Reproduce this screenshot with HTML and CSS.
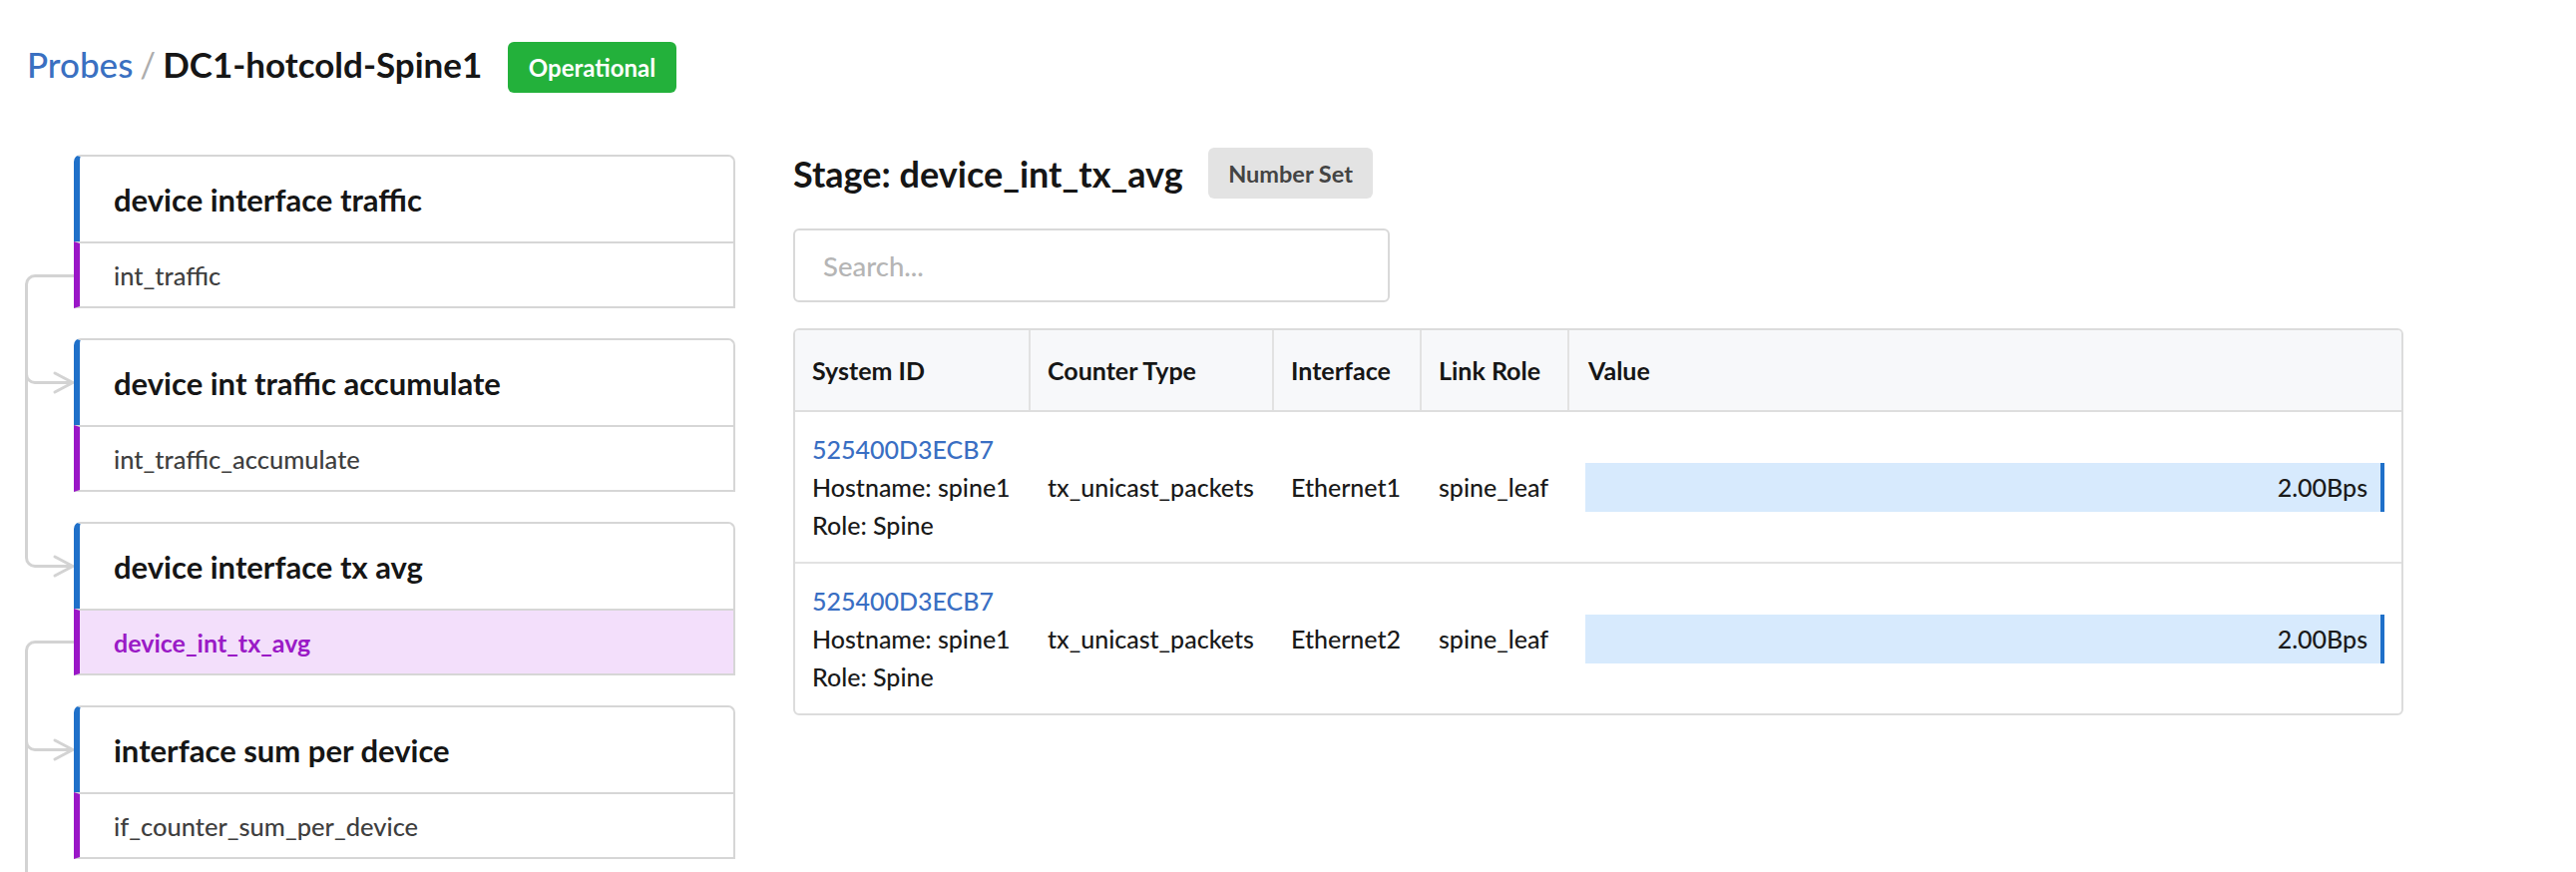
FILE: index.html
```html
<!DOCTYPE html>
<html lang="en">
<head>
<meta charset="utf-8">
<title>Probes / DC1-hotcold-Spine1</title>
<link rel="stylesheet" href="styles.css">
</head>
<body>
<div class="page">
  <header class="crumbs">
    <div class="crumb-text">
      <a class="crumb-link" href="#">Probes</a>
      <span class="crumb-sep">/</span>
      <h1 class="crumb-title">DC1-hotcold-Spine1</h1>
    </div>
    <span class="badge badge-ok">Operational</span>
  </header>

  <svg class="connectors" width="90" height="874" viewBox="0 0 90 874" aria-hidden="true">
    <g fill="none" stroke="#d3d3d3" stroke-width="3" stroke-linecap="round" stroke-linejoin="round">
      <path d="M74 276.5 H35 A8.5 8.5 0 0 0 26.5 285 V559 A8.5 8.5 0 0 0 35 567.5 H72"/>
      <path d="M26.5 375 A8.5 8.5 0 0 0 35 383.5 H72"/>
      <path d="M55 374 L73 383.5 L55 393"/>
      <path d="M55 558 L73 567.5 L55 577"/>
      <path d="M74 643.5 H35 A8.5 8.5 0 0 0 26.5 652 V880"/>
      <path d="M26.5 743 A8.5 8.5 0 0 0 35 751.5 H72"/>
      <path d="M55 742 L73 751.5 L55 761"/>
    </g>
  </svg>

  <div class="main">
    <div class="pipeline">
      <div class="card">
        <div class="card-head">device interface traffic</div>
        <div class="card-sub">int_traffic</div>
      </div>
      <div class="card">
        <div class="card-head">device int traffic accumulate</div>
        <div class="card-sub">int_traffic_accumulate</div>
      </div>
      <div class="card">
        <div class="card-head">device interface tx avg</div>
        <div class="card-sub card-sub-active">device_int_tx_avg</div>
      </div>
      <div class="card">
        <div class="card-head">interface sum per device</div>
        <div class="card-sub">if_counter_sum_per_device</div>
      </div>
    </div>

    <section class="stage">
      <div class="stage-head">
        <h2 class="stage-title">Stage: device_int_tx_avg</h2>
        <span class="badge badge-gray">Number Set</span>
      </div>
      <input class="search" type="text" placeholder="Search...">
      <div class="table">
        <div class="trow thead">
          <div class="th">System ID</div>
          <div class="th">Counter Type</div>
          <div class="th">Interface</div>
          <div class="th">Link Role</div>
          <div class="th th-last">Value</div>
        </div>
        <div class="trow tbody-row">
          <div class="td td-sys">
            <a class="sys-link" href="#">525400D3ECB7</a>
            <div>Hostname: spine1</div>
            <div>Role: Spine</div>
          </div>
          <div class="td">tx_unicast_packets</div>
          <div class="td">Ethernet1</div>
          <div class="td">spine_leaf</div>
          <div class="td td-value"><div class="bar" style="width:100%">2.00Bps</div></div>
        </div>
        <div class="trow tbody-row">
          <div class="td td-sys">
            <a class="sys-link" href="#">525400D3ECB7</a>
            <div>Hostname: spine1</div>
            <div>Role: Spine</div>
          </div>
          <div class="td">tx_unicast_packets</div>
          <div class="td">Ethernet2</div>
          <div class="td">spine_leaf</div>
          <div class="td td-value"><div class="bar" style="width:100%">2.00Bps</div></div>
        </div>
      </div>
    </section>
  </div>
</div>
</body>
</html>
```
FILE: styles.css
```css
* { box-sizing: border-box; }
html, body { margin: 0; padding: 0; background: #fff; }
body {
  font-family: Lato, "Open Sans", "Liberation Sans", sans-serif;
  color: #1a1a1a;
}
.page {
  position: relative;
  padding: 42px 0 0 27px;
  min-height: 874px;
  overflow: hidden;
}

/* breadcrumb header */
.crumbs {
  display: flex;
  align-items: center;
  height: 51px;
}
.crumb-text {
  display: flex;
  align-items: baseline;
  font-size: 35px;
  padding-bottom: 7px;
}
.crumb-link { color: #3a70c1; text-decoration: none; font-weight: 500; }
.crumb-sep { color: #adadad; margin: 0 7px; }
.crumb-title { margin: 0; font-size: 35px; font-weight: 700; color: #161616; }

.badge {
  display: inline-flex;
  align-items: center;
  height: 51px;
  padding: 0 20.5px;
  border-radius: 6px;
  font-weight: 700;
}
.badge-ok {
  margin-left: 26px;
  background: #23b13b;
  color: #fff;
  font-size: 24px;
}
.badge-gray {
  background: #e3e3e3;
  color: #444;
  font-size: 23.5px;
}

/* connectors overlay */
.connectors {
  position: absolute;
  left: 0;
  top: 0;
}

/* main area */
.main {
  display: flex;
  margin-top: 55px;
}
.pipeline {
  width: 710px;
  padding: 7px 0 0 47px;
  display: flex;
  flex-direction: column;
  gap: 30px;
  position: relative;
  z-index: 1;
}
.card { width: 663px; }
.card-head {
  height: 87px;
  display: flex;
  align-items: center;
  padding-left: 34px;
  border-top: 2px solid #d6d6d6;
  border-right: 2px solid #d6d6d6;
  border-left: 6px solid #1f70c9;
  border-radius: 7px 7px 0 0;
  font-size: 31px;
  font-weight: 700;
  color: #161616;
  background: #fff;
}
.card-sub {
  height: 67px;
  display: flex;
  align-items: center;
  padding-left: 34px;
  border-top: 2px solid #d6d6d6;
  border-right: 2px solid #d6d6d6;
  border-bottom: 2px solid #d6d6d6;
  border-left: 6px solid #9a16c7;
  font-size: 25.5px;
  font-weight: 500;
  color: #3f3f3f;
  background: #fff;
}
.card-sub-active {
  background: #f3dffb;
  color: #9a1ac6;
  font-weight: 700;
  font-size: 25px;
}

/* stage panel */
.stage {
  width: 1614px;
  margin-left: 58px;
}
.stage-head {
  display: flex;
  align-items: center;
  gap: 25px;
  height: 51px;
}
.stage-title {
  margin: 0;
  font-size: 36px;
  font-weight: 700;
  color: #161616;
}
.search {
  display: block;
  margin-top: 30px;
  width: 598px;
  height: 74px;
  border: 2px solid #d9d9d9;
  border-radius: 6px;
  padding: 0 0 0 28px;
  font-family: inherit;
  font-size: 27.5px;
  font-weight: 500;
  color: #222;
  outline: none;
}
.search::placeholder { color: #b5b5b5; }

.table {
  margin-top: 26px;
  border: 2px solid #dcdcdc;
  border-radius: 6px;
  overflow: hidden;
  font-size: 25px;
}
.trow {
  display: grid;
  grid-template-columns: 236px 244px 148px 148px 1fr;
}
.thead {
  height: 82px;
  background: #f7f8fa;
  border-bottom: 2px solid #dedede;
}
.th {
  display: flex;
  align-items: center;
  padding-left: 17px;
  border-right: 2px solid #e2e2e2;
  font-weight: 700;
  color: #161616;
}
.th-last { border-right: none; padding-left: 19px; }
.tbody-row {
  color: #1a1a1a;
  font-weight: 500;
  line-height: 38px;
}
.tbody-row + .tbody-row { border-top: 2px solid #e2e2e2; }
.td {
  display: flex;
  align-items: center;
  padding: 18px 0 18px 17px;
}
.td-sys {
  flex-direction: column;
  align-items: flex-start;
}
.sys-link { color: #3a6fc3; text-decoration: none; }
.td-value { padding: 0 17px 0 16px; }
.bar {
  height: 49px;
  display: flex;
  align-items: center;
  justify-content: flex-end;
  padding-right: 13px;
  background: #d7eafd;
  border-right: 4px solid #1f70c9;
}
```
